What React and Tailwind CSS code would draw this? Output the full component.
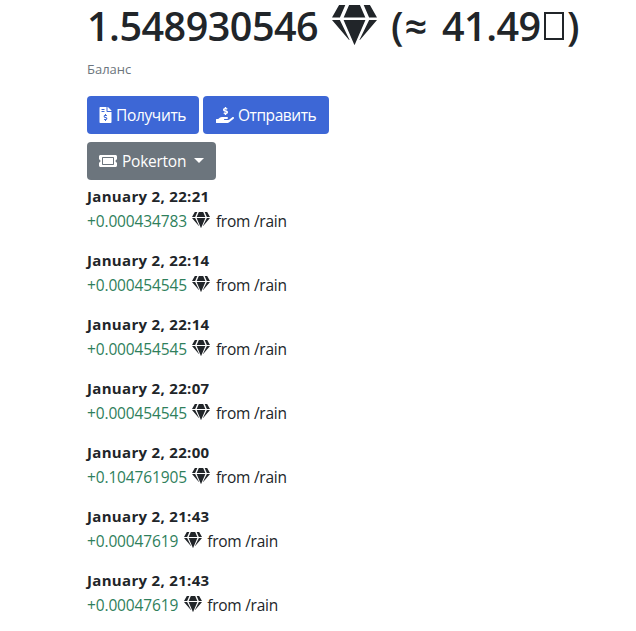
import React from "react";
import { FaGem, FaFileInvoiceDollar, FaHandHoldingUsd, FaTicketAlt } from "react-icons/fa";

const transactions = [
  { date: "January 2, 22:21", amount: "+0.000434783" },
  { date: "January 2, 22:14", amount: "+0.000454545" },
  { date: "January 2, 22:14", amount: "+0.000454545" },
  { date: "January 2, 22:07", amount: "+0.000454545" },
  { date: "January 2, 22:00", amount: "+0.104761905" },
  { date: "January 2, 21:43", amount: "+0.00047619" },
  { date: "January 2, 21:43", amount: "+0.00047619" },
];

function Transaction({ date, amount }) {
  return (
    <li className="mb-4">
      <div className="h-6 text-[15px] font-bold leading-6 tracking-[0.32px]">{date}</div>
      <div className="flex h-6 items-start">
        <span className="text-[15.5px] leading-[26px] tracking-[-0.14px] text-[#2f7f5c]">{amount}</span>
        <FaGem className="ml-[5.5px] mt-1 h-4 w-[18px] shrink-0" />
        <span className="ml-[5.5px] text-[15.5px] leading-[26px] tracking-[-0.25px]">from /rain</span>
      </div>
    </li>
  );
}

export default function App() {
  return (
    <main className="min-h-[631px] whitespace-nowrap bg-white pl-[87px] pt-[2px] font-['Open_Sans','Noto_Sans',sans-serif] text-[#212529]">
      <h1 className="flex h-12 items-start text-[39.5px] font-semibold leading-[48px]">
        <span className="w-[245px] tracking-[-0.5px]">1.548930546</span>
        <FaGem className="mt-[3px] h-10 w-[45px] shrink-0" />
        <span className="ml-[14px] w-[51px] tracking-[1px]">(≈</span>
        <span className="w-[102px] tracking-[-0.5px]">41.49</span>
        <span className="mt-[10px] h-[28px] w-[20px] border-2 border-current" />
        <span className="ml-[3px]">)</span>
      </h1>
      <p className="mt-[9px] h-[21px] text-[13px] leading-[21px] text-[#6c757d]">Баланс</p>
      <div className="mt-4 flex gap-1 text-white">
        <button className="flex h-[38px] w-[112px] items-center rounded bg-[#3d67d6] pl-3 text-base">
          <FaFileInvoiceDollar className="h-4 w-[13px] shrink-0" />
          <span className="ml-1 pt-[2px] text-[15.5px] tracking-[-0.35px]">Получить</span>
        </button>
        <button className="flex h-[38px] w-[126px] items-center rounded bg-[#3d67d6] pl-[13px] text-base">
          <FaHandHoldingUsd className="h-4 w-[18px] shrink-0" />
          <span className="ml-1 pt-[2px] text-[15.5px] tracking-[-0.45px]">Отправить</span>
        </button>
      </div>
      <button className="mt-2 flex h-[38px] w-[129px] items-center rounded bg-[#6c757d] pl-3 text-white">
        <FaTicketAlt className="h-4 w-[18px] shrink-0" />
        <span className="ml-[5px] w-[72px] pt-px text-left text-[15.5px] tracking-[-0.25px]">Pokerton</span>
        <span className="-mt-[2px] border-x-[5px] border-t-[5px] border-x-transparent border-t-white" />
      </button>
      <ul className="-mb-4 mt-1">
        {transactions.map((item, index) => (
          <Transaction key={index} date={item.date} amount={item.amount} />
        ))}
      </ul>
    </main>
  );
}
